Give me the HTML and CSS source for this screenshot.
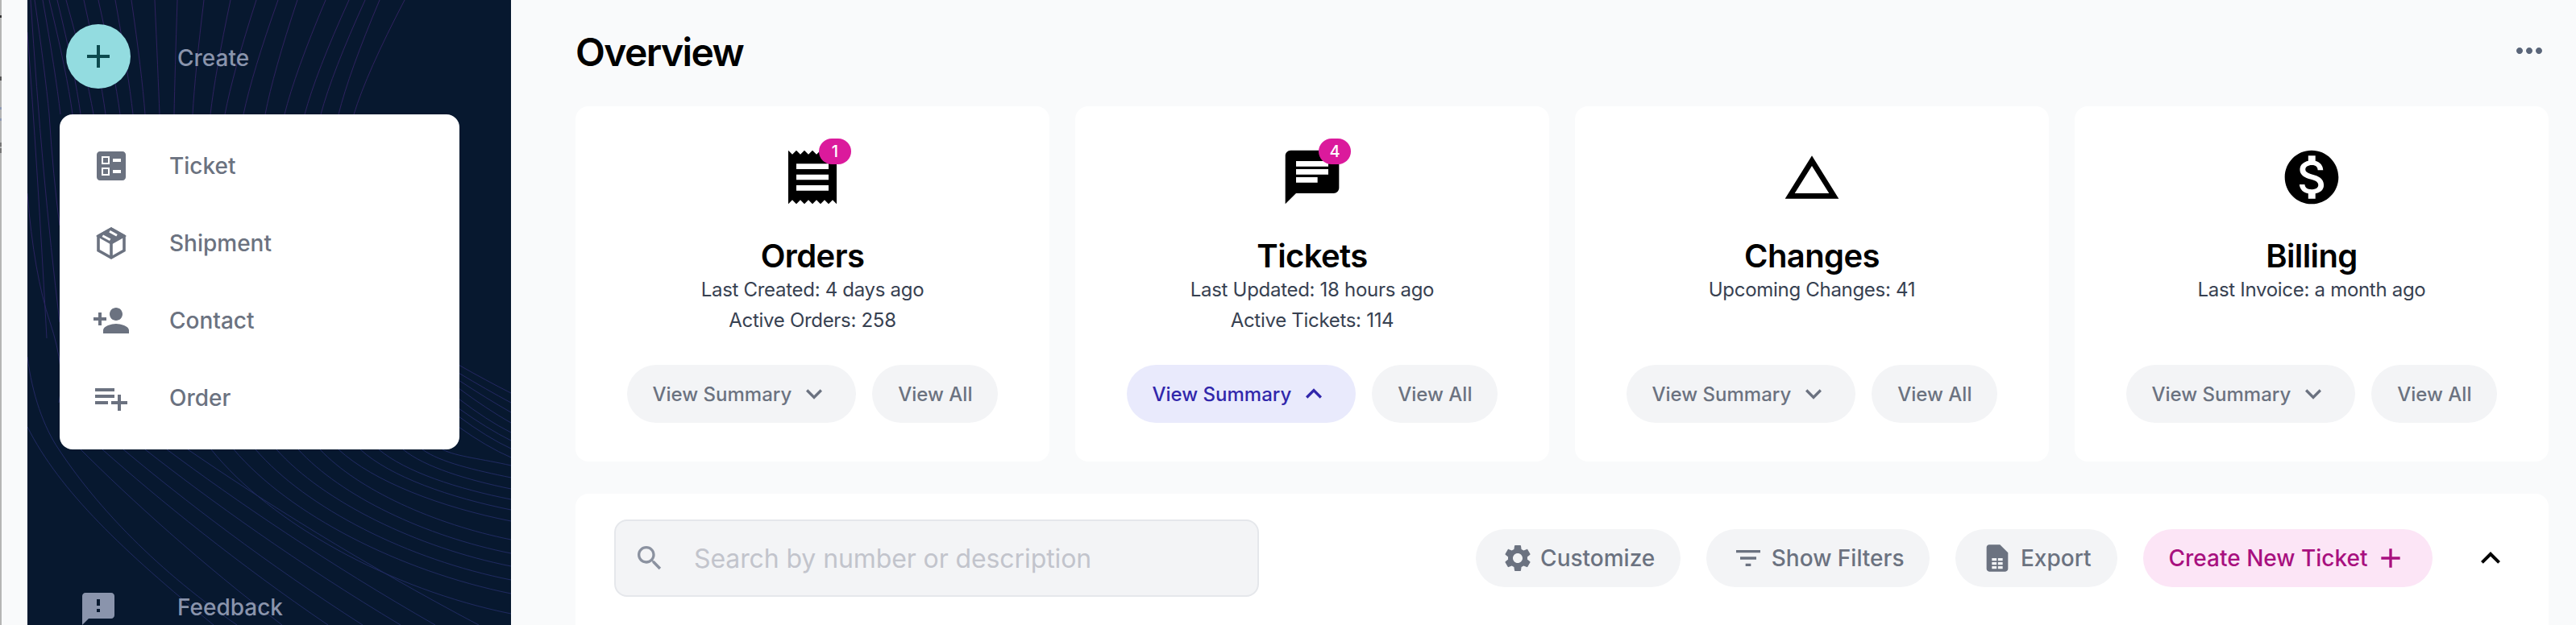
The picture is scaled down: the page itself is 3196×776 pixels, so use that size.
FILE: index.html
```html
<!DOCTYPE html>
<html lang="en">
<head>
  <meta charset="UTF-8" />
  <meta name="viewport" content="width=device-width, initial-scale=1.0" />
  <title>Overview</title>
  <link rel="stylesheet" href="styles.css">
</head>
<body>
  <div class="edge"></div>

  <!-- Sidebar -->
  <aside class="sidebar">
    <svg class="sidebar-lines" viewBox="0 0 600 776" width="600" height="776" fill="none">
      <defs>
        <linearGradient id="lineColor" gradientUnits="userSpaceOnUse" x1="0" y1="0" x2="0" y2="776">
          <stop offset="0" stop-color="#30215f" />
          <stop offset="0.45" stop-color="#2a2260" />
          <stop offset="0.7" stop-color="#202a62" />
          <stop offset="1" stop-color="#1f2a60" />
        </linearGradient>
      </defs>
      <g stroke="url(#lineColor)" stroke-width="1">
        <!-- top fan -->
        <path d="M9 0Q22 90 27 142" />
        <path d="M19 0Q35 90 41 142" />
        <path d="M27 0Q49 90 56 142" />
        <path d="M37 0Q59 90 66 142" />
        <path d="M48 0Q73 90 82 142" />
        <path d="M70 0Q90 90 97 142" />
        <path d="M88 0Q108 90 115 142" />
        <path d="M109 0Q125 90 131 142" />
        <path d="M129 0Q142 90 146 142" />
        <path d="M158 0Q162 90 164 142" />
        <path d="M186 0Q183 90 182 142" />
        <path d="M219 0Q208 90 205 142" />
        <path d="M252 0Q233 90 227 142" />
        <path d="M284 0Q255 90 245 142" />
        <path d="M311 0Q279 90 268 142" />
        <path d="M335 0Q305 90 295 142" />
        <path d="M370 0Q332 90 319 142" />
        <path d="M399 0Q358 90 344 142" />
        <path d="M419 0Q378 90 364 142" />
        <path d="M437 0Q399 90 386 142" />
        <path d="M468 0Q421 90 405 142" />
        <!-- left strip -->
        <path d="M0 40Q12 200 24 420" />
        <path d="M4 0Q18 220 40 400" />
        <path d="M27 142Q32 220 40 280" />
        <path d="M0 240Q8 340 28 400T39 500" />
        <path d="M0 443C6 490 20 530 39 558" />
        <!-- arcs below the menu -->
        <path d="M0 530C40 610 120 685 231 776" />
        <path d="M39 558C80 620 150 700 260 776" />
        <path d="M66 558C128 620 216 700 316 776" />
        <path d="M93 558C163 620 261 700 373 776" />
        <path d="M119 558C193 620 297 700 416 776" />
        <path d="M146 558C225 620 336 700 463 776" />
        <path d="M173 558C256 620 373 700 506 776" />
        <path d="M199 558C289 620 416 700 560 776" />
        <path d="M228 558C302 650 451 732 600 762" />
        <path d="M256 558C325 639 462 709 600 737" />
        <path d="M283 558C346 631 473 695 600 720" />
        <path d="M309 558C367 623 484 680 600 703" />
        <path d="M336 558C389 616 494 666 600 687" />
        <path d="M363 558C410 608 505 651 600 670" />
        <path d="M386 558C429 598 514 630 600 647" />
        <path d="M413 558C450 592 525 618 600 633" />
        <path d="M436 558C469 586 534 607 600 620" />
        <path d="M466 558C493 580 546 596 600 607" />
        <path d="M490 558C512 574 556 584 600 593" />
        <path d="M515 558C532 567 566 570 600 578" />
        <path d="M535 530Q570 555 600 568" />
        <path d="M535 517Q570 543 600 557" />
        <path d="M535 507Q570 532 600 547" />
        <path d="M535 495Q570 522 600 537" />
        <path d="M535 482Q570 508 600 525" />
        <path d="M535 472Q570 495 600 512" />
        <path d="M535 463Q570 484 600 500" />
        <path d="M535 453Q570 473 600 488" />
      </g>
    </svg>

    <div class="create-row">
      <div class="create-btn">
        <svg width="48" height="48" viewBox="0 0 24 24" fill="currentColor"><path d="M19 13h-6v6h-2v-6H5v-2h6V5h2v6h6v2z"/></svg>
      </div>
      <span>Create</span>
    </div>

    <nav class="create-menu">
      <a class="menu-item">
        <svg width="48" height="48" viewBox="0 0 24 24" fill="currentColor" fill-rule="evenodd"><path d="M13 9.500h5v-2h-5v2zm0 7h5v-2h-5v2zm6 4.500H5c-1.100 0-2-.9-2-2V5c0-1.100.9-2 2-2h14c1.100 0 2 .9 2 2v14c0 1.100-.9 2-2 2zM6 11h5V6H6v5zm1-4h3v3H7V7zM6 18h5v-5H6v5zm1-4h3v3H7v-3z"/></svg>
        Ticket
      </a>
      <a class="menu-item">
        <svg width="48" height="48" viewBox="0 0 48 48" fill="none" stroke="currentColor" stroke-width="3.6" stroke-linejoin="miter">
          <path d="M24 6L40 15V33L24 42L8 33V15Z" />
          <path d="M8 15L24 24L40 15L24 6Z" fill="currentColor" stroke-width="3" />
          <path d="M24 24V42" />
          <path d="M22 9.300L31 14.300M13.300 14.700L22.700 19.700" stroke="#fff" stroke-width="3" />
        </svg>
        Shipment
      </a>
      <a class="menu-item">
        <svg width="48" height="48" viewBox="0 0 24 24" fill="currentColor"><path d="M15 12c2.210 0 4-1.790 4-4s-1.790-4-4-4-4 1.790-4 4 1.790 4 4 4zm-9-2V7H4v3H1v2h3v3h2v-3h3v-2H6zm9 4c-2.670 0-8 1.340-8 4v2h16v-2c0-2.660-5.330-4-8-4z"/></svg>
        Contact
      </a>
      <a class="menu-item">
        <svg width="48" height="48" viewBox="0 0 24 24" fill="currentColor"><path d="M14 10H2v2h12v-2zm0-4H2v2h12V6zm4 8v-4h-2v4h-4v2h4v4h2v-4h4v-2h-4zM2 16h8v-2H2v2z"/></svg>
        Order
      </a>
    </nav>

    <a class="feedback">
      <svg width="48" height="48" viewBox="0 0 24 24" fill="currentColor"><path d="M20 2H4c-1.100 0-1.990.9-1.990 2L2 22l4-4h14c1.100 0 2-.9 2-2V4c0-1.100-.9-2-2-2zm-7 12h-2v-2h2v2zm0-4h-2V6h2v4z"/></svg>
      <span>Feedback</span>
    </a>
  </aside>

  <!-- Main -->
  <main class="content">
    <div class="page-head">
      <h1>Overview</h1>
      <svg class="more" width="48" height="48" viewBox="0 0 24 24" fill="currentColor"><path d="M6 10c-1.100 0-2 .9-2 2s.9 2 2 2 2-.9 2-2-.9-2-2-2zm12 0c-1.100 0-2 .9-2 2s.9 2 2 2 2-.9 2-2-.9-2-2-2zm-6 0c-1.100 0-2 .9-2 2s.9 2 2 2 2-.9 2-2-.9-2-2-2z"/></svg>
    </div>

    <section class="cards">
      <div class="card">
        <div class="card-icon">
          <svg width="80" height="80" viewBox="0 0 24 24" fill="currentColor"><path d="M18 17H6v-2h12v2zm0-4H6v-2h12v2zm0-4H6V7h12v2zM3 22l1.500-1.500L6 22l1.500-1.500L9 22l1.500-1.500L12 22l1.500-1.500L15 22l1.500-1.500L18 22l1.500-1.500L21 22V2l-1.500 1.500L18 2l-1.500 1.500L15 2l-1.500 1.500L12 2l-1.500 1.500L9 2 7.500 3.500 6 2 4.500 3.500 3 2v20z"/></svg>
          <span class="badge">1</span>
        </div>
        <h2>Orders</h2>
        <p>Last Created: 4 days ago</p>
        <p>Active Orders: 258</p>
        <div class="card-actions">
          <button class="pill">View Summary
            <svg width="40" height="40" viewBox="0 0 24 24" fill="currentColor"><path d="M16.590 8.590L12 13.170 7.410 8.590 6 10l6 6 6-6z"/></svg>
          </button>
          <button class="pill">View All</button>
        </div>
      </div>

      <div class="card">
        <div class="card-icon">
          <svg width="80" height="80" viewBox="0 0 24 24" fill="currentColor"><path d="M20 2H4c-1.100 0-1.990.9-1.990 2L2 22l4-4h14c1.100 0 2-.9 2-2V4c0-1.100-.9-2-2-2zM6 9h12v2H6V9zm8 5H6v-2h8v2zm4-6H6V6h12v2z"/></svg>
          <span class="badge">4</span>
        </div>
        <h2>Tickets</h2>
        <p>Last Updated: 18 hours ago</p>
        <p>Active Tickets: 114</p>
        <div class="card-actions">
          <button class="pill pill-active">View Summary
            <svg width="40" height="40" viewBox="0 0 24 24" fill="currentColor"><path d="M12 8l-6 6 1.410 1.410L12 10.830l4.590 4.580L18 14z"/></svg>
          </button>
          <button class="pill">View All</button>
        </div>
      </div>

      <div class="card">
        <div class="card-icon">
          <svg width="80" height="80" viewBox="0 0 24 24" fill="currentColor"><path d="M12 7.770L18.390 18H5.610L12 7.770M12 4L2 20h20L12 4z"/></svg>
        </div>
        <h2>Changes</h2>
        <p>Upcoming Changes: 41</p>
        <div class="card-actions">
          <button class="pill">View Summary
            <svg width="40" height="40" viewBox="0 0 24 24" fill="currentColor"><path d="M16.590 8.590L12 13.170 7.410 8.590 6 10l6 6 6-6z"/></svg>
          </button>
          <button class="pill">View All</button>
        </div>
      </div>

      <div class="card">
        <div class="card-icon">
          <svg width="80" height="80" viewBox="0 0 24 24" fill="currentColor"><path d="M12 2C6.480 2 2 6.480 2 12s4.480 10 10 10 10-4.480 10-10S17.520 2 12 2zm1.410 16.090V20h-2.670v-1.930c-1.710-.36-3.160-1.460-3.270-3.400h1.960c.1 1.050.82 1.870 2.650 1.870 1.960 0 2.400-.98 2.400-1.590 0-.83-.44-1.610-2.670-2.140-2.480-.6-4.180-1.620-4.180-3.670 0-1.720 1.390-2.840 3.110-3.210V4h2.670v1.950c1.860.45 2.790 1.860 2.870 3.390H14.300c-.05-1.110-.64-1.870-2.220-1.870-1.500 0-2.400.68-2.400 1.640 0 .84.65 1.390 2.670 1.910s4.180 1.390 4.180 3.910c-.01 1.830-1.380 2.830-3.120 3.160z"/></svg>
        </div>
        <h2>Billing</h2>
        <p>Last Invoice: a month ago</p>
        <div class="card-actions">
          <button class="pill">View Summary
            <svg width="40" height="40" viewBox="0 0 24 24" fill="currentColor"><path d="M16.590 8.590L12 13.170 7.410 8.590 6 10l6 6 6-6z"/></svg>
          </button>
          <button class="pill">View All</button>
        </div>
      </div>
    </section>

    <section class="toolbar">
      <label class="search">
        <svg width="40" height="40" viewBox="0 0 24 24" fill="currentColor"><path d="M15.500 14h-.79l-.28-.27C15.410 12.590 16 11.110 16 9.500 16 5.910 13.090 3 9.500 3S3 5.910 3 9.500 5.910 16 9.500 16c1.610 0 3.090-.59 4.230-1.570l.27.28v.79l5 4.990L20.490 19l-4.990-5zm-6 0C7.010 14 5 11.990 5 9.500S7.010 5 9.500 5 14 7.010 14 9.500 11.990 14 9.500 14z"/></svg>
        <input type="text" placeholder="Search by number or description" />
      </label>
      <div class="toolbar-actions">
        <button class="pill pill-lg">
          <svg width="40" height="40" viewBox="0 0 24 24" fill="currentColor"><path d="M19.140 12.940c.04-.3.06-.61.06-.94 0-.32-.02-.64-.07-.94l2.030-1.580c.18-.14.23-.41.12-.61l-1.920-3.320c-.12-.22-.37-.29-.59-.22l-2.390.96c-.5-.38-1.030-.7-1.620-.94l-.36-2.540c-.04-.24-.24-.41-.48-.41h-3.840c-.24 0-.43.17-.47.41l-.36 2.540c-.59.24-1.130.57-1.620.94l-2.390-.96c-.22-.08-.47 0-.59.22L2.740 8.870c-.12.21-.08.47.12.61l2.030 1.580c-.05.3-.09.63-.09.94s.02.64.07.94l-2.030 1.580c-.18.14-.23.41-.12.61l1.920 3.320c.12.22.37.29.59.22l2.390-.96c.5.38 1.030.7 1.620.94l.36 2.540c.05.24.24.41.48.41h3.840c.24 0 .44-.17.47-.41l.36-2.540c.59-.24 1.130-.56 1.620-.94l2.390.96c.22.08.47 0 .59-.22l1.920-3.320c.12-.22.07-.47-.12-.61l-2.010-1.580zM12 15.600c-1.980 0-3.600-1.620-3.600-3.600s1.620-3.600 3.600-3.600 3.600 1.620 3.600 3.600-1.620 3.600-3.600 3.600z"/></svg>
          Customize
        </button>
        <button class="pill pill-lg">
          <svg width="40" height="40" viewBox="0 0 24 24" fill="currentColor"><path d="M10 18h4v-2h-4v2zM3 6v2h18V6H3zm3 7h12v-2H6v2z"/></svg>
          Show Filters
        </button>
        <button class="pill pill-lg">
          <svg width="40" height="40" viewBox="0 0 24 24" fill="currentColor" fill-rule="evenodd"><path d="M14 2H6c-1.100 0-2 .9-2 2v16c0 1.100.9 2 2 2h12c1.100 0 2-.9 2-2V8l-6-6zM8 12h3.500v2H8v-2zm4.500 0H16v2h-3.500v-2zM8 15h3.500v2H8v-2zm4.500 0H16v2h-3.500v-2zM8 18h3.500v2H8v-2zm4.500 0H16v2h-3.500v-2z"/></svg>
          Export
        </button>
        <button class="pill pill-lg pill-pink">
          Create New Ticket
          <svg width="40" height="40" viewBox="0 0 24 24" fill="currentColor"><path d="M19 13h-6v6h-2v-6H5v-2h6V5h2v6h6v2z"/></svg>
        </button>
        <svg class="collapse" width="48" height="48" viewBox="0 0 24 24" fill="currentColor"><path d="M12 8l-6 6 1.410 1.410L12 10.830l4.590 4.580L18 14z"/></svg>
      </div>
    </section>
  </main>
</body>
</html>
```
FILE: styles.css
```css
* {
  box-sizing: border-box;
}
body {
  margin: 0;
  display: flex;
  height: 776px;
  overflow: hidden;
  font-family: 'Inter', 'Liberation Sans', sans-serif;
  background-color: #f9fafb;
}
svg {
  flex-shrink: 0;
  display: block;
}
.edge {
  width: 34px;
  flex-shrink: 0;
  background: linear-gradient(to bottom,
    #b5b5b5 19px, #333 19px, #333 22px, #b5b5b5 22px,
    #b5b5b5 95px, #555 95px, #555 100px, #b5b5b5 100px,
    #b5b5b5 133px, #8f9ab5 133px, #8f9ab5 136px, #b5b5b5 136px,
    #b5b5b5 147px, #8f9ab5 147px, #8f9ab5 150px, #b5b5b5 150px,
    #b5b5b5 177px, #777 177px, #777 182px, #b5b5b5 182px,
    #b5b5b5 184px, #777 184px, #777 190px, #b5b5b5 190px) no-repeat 0 0 / 2px 100%;
}

/* Sidebar */
.sidebar {
  position: relative;
  width: 600px;
  height: 776px;
  flex-shrink: 0;
  display: flex;
  flex-direction: column;
  overflow: hidden;
  background: #07182f;
  padding-top: 30px;
}
.sidebar-lines {
  position: absolute;
  top: 0;
  left: 0;
}
.create-row,
.create-menu,
.feedback {
  position: relative;
}
.create-row {
  display: flex;
  align-items: center;
  gap: 58px;
  margin-left: 48px;
  color: #8a94ac;
  font-size: 28px;
  font-weight: 500;
}
.create-row span {
  margin-top: 4px;
}
.create-btn {
  width: 80px;
  height: 80px;
  border-radius: 50%;
  background: #93dce0;
  color: #0c4a4e;
  display: flex;
  align-items: center;
  justify-content: center;
}
.create-menu {
  width: 496px;
  margin: 32px 0 0 40px;
  padding: 16px 0;
  background: #fff;
  border-radius: 16px;
}
.menu-item {
  display: flex;
  align-items: center;
  gap: 48px;
  height: 96px;
  padding-left: 40px;
  color: #6b7280;
  font-size: 28px;
  font-weight: 500;
}
.feedback {
  display: flex;
  align-items: center;
  gap: 74px;
  margin-top: auto;
  margin-bottom: -4px;
  padding-left: 64px;
  color: #8a94ac;
  font-size: 28px;
  font-weight: 500;
}
.feedback span {
  margin-bottom: 4px;
}

/* Main */
.content {
  flex: 1;
  min-width: 0;
  padding: 0 34px 0 80px;
}
.page-head {
  display: flex;
  justify-content: space-between;
  align-items: center;
  height: 132px;
  padding-bottom: 2px;
}
.page-head h1 {
  margin: 0;
  color: #000;
  font-size: 48px;
  font-weight: 600;
  line-height: 60px;
  letter-spacing: -1.6px;
}
.more {
  margin-bottom: 4px;
  color: #5a6579;
}
.cards {
  display: grid;
  grid-template-columns: repeat(4, 588px);
  gap: 32px;
}
.card {
  display: flex;
  flex-direction: column;
  align-items: center;
  background: #fff;
  border-radius: 16px;
  padding: 48px 0;
}
.card-icon {
  position: relative;
  width: 80px;
  height: 80px;
  color: #000;
  margin-bottom: 35px;
}
.badge {
  position: absolute;
  top: -8px;
  left: 48px;
  width: 40px;
  height: 32px;
  border-radius: 16px;
  background: #db1a9c;
  color: #fff;
  font-size: 20px;
  font-weight: 500;
  line-height: 32px;
  text-align: center;
}
.card h2 {
  margin: 0;
  color: #000;
  font-size: 40px;
  font-weight: 600;
  line-height: 46px;
  letter-spacing: -0.6px;
}
.card p {
  margin: 0;
  color: #374151;
  font-size: 24px;
  line-height: 38px;
  letter-spacing: -0.3px;
}
.card-actions {
  display: flex;
  gap: 20px;
  margin-top: auto;
  padding-top: 36px;
}
.pill {
  display: flex;
  align-items: center;
  gap: 8px;
  height: 72px;
  padding: 0 32px;
  border: none;
  border-radius: 36px;
  background: #f3f4f6;
  color: #6b7280;
  font-family: inherit;
  font-size: 24px;
  font-weight: 500;
  white-space: nowrap;
}
.pill-active {
  background: #e9eafc;
  color: #3127ab;
}
.pill-lg {
  gap: 8.5px;
  font-size: 28px;
}
.pill-pink {
  background: #fce5f6;
  color: #a8107f;
}

/* Table toolbar */
.toolbar {
  display: flex;
  justify-content: space-between;
  align-items: center;
  height: 190px;
  margin-top: 40px;
  padding: 0 48px 30px;
  background: #fff;
  border-radius: 16px;
}
.search {
  display: flex;
  align-items: center;
  gap: 35px;
  width: 800px;
  height: 96px;
  padding-left: 22px;
  background: #f3f4f6;
  border: 2px solid #e5e7eb;
  border-radius: 16px;
  color: #8b92a0;
}
.search input {
  flex: 1;
  min-width: 0;
  padding: 0;
  border: none;
  outline: none;
  background: transparent;
  font-family: inherit;
  font-size: 32px;
  letter-spacing: -0.1px;
}
.search input::placeholder {
  color: #c2c4cc;
}
.toolbar-actions {
  display: flex;
  align-items: center;
  gap: 32px;
}
.collapse {
  margin-left: 16px;
  color: #000;
}
```
